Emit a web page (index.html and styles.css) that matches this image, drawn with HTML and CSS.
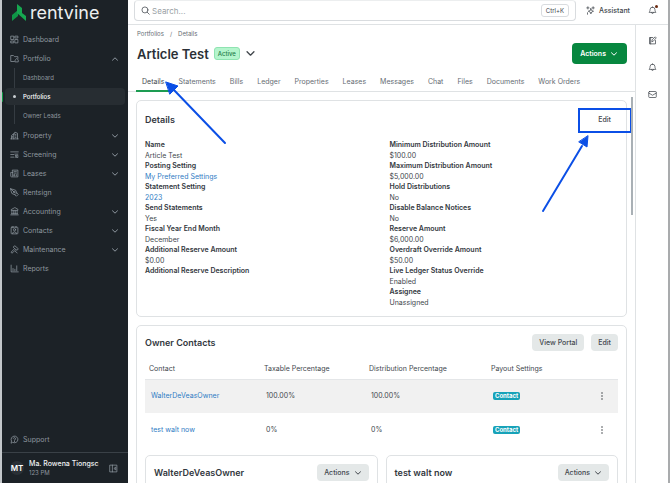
FILE: index.html
```html
<!DOCTYPE html>
<html lang="en">
	<head>
		<meta charset="UTF-8" />
		<meta name="viewport" content="width=device-width, initial-scale=1.0" />
		<title>Article Test - Rentvine</title>
		<link rel="stylesheet" href="styles.css">
	</head>
	<body>
		<svg class="sprite" aria-hidden="true">
			<symbol id="chevron" viewBox="0 0 8 8"><path d="M1.5 2.8 4 5.2 6.5 2.8" /></symbol>
			<symbol id="chevron-up" viewBox="0 0 8 8"><path d="M1.5 5.2 4 2.8 6.5 5.2" /></symbol>
			<symbol id="bell" viewBox="0 0 24 24"><path d="M12 3a6.500 6.500 0 0 0-6.500 6.500c0 4-1.500 5.500-2.500 7.500h18c-1-2-2.500-3.500-2.500-7.500A6.500 6.500 0 0 0 12 3zM9.500 17.500a2.500 2.500 0 0 0 5 0" /></symbol>
		</svg>

		<aside class="sidebar">
			<a href="#" class="logo">
				<svg viewBox="0 0 14 20"><path class="leaf-dark" d="M0 12 6 7v6L0 18z" /><path class="leaf" d="M5 1l5 4v5l4 3v5L5 10z" /></svg>
				<span>rentvine</span>
			</a>

			<nav class="menu">
				<a href="#" class="menu-item"><svg class="icon" viewBox="0 0 24 24"><path d="M3 3h7v9H3zM14 3h7v5h-7zM14 12h7v9h-7zM3 16h7v5H3z" /></svg><span>Dashboard</span></a>
				<button class="menu-item"><svg class="icon" viewBox="0 0 24 24"><path d="M11 20H2V4h7l3 3h9v5M14 16l4-4 4 4v5h-8z" /></svg><span>Portfolio</span><svg class="arrow"><use href="#chevron-up" /></svg></button>
				<div class="submenu">
					<a href="#">Dashboard</a>
					<a href="#" class="current">Portfolios</a>
					<a href="#">Owner Leads</a>
				</div>
				<button class="menu-item"><svg class="icon" viewBox="0 0 24 24"><path d="M2 21h20M4 21V12l6-5v14M10 10l3-7 7 3v15M7 14v3M14 9h2M14 13h2M14 17h2" /></svg><span>Property</span><svg class="arrow"><use href="#chevron" /></svg></button>
				<button class="menu-item"><svg class="icon" viewBox="0 0 24 24"><path d="M2 5h20M2 12h8M2 19h8M13 11h8M14 14l2 2-2 4M18 14h3v6h-3z" /></svg><span>Screening</span><svg class="arrow"><use href="#chevron" /></svg></button>
				<button class="menu-item"><svg class="icon" viewBox="0 0 24 24"><path d="M7 3h14v18H4a2 2 0 0 1-2-2V9h5zM7 9v10M11 7h6M11 11h6M11 15h2v3h-2zM17 15v3" /></svg><span>Leases</span><svg class="arrow"><use href="#chevron" /></svg></button>
				<a href="#" class="menu-item"><svg class="icon" viewBox="0 0 24 24"><path d="M2 2l13 4 3 7-5 5-7-3zM2 2l8 8M18 13l4 4-5 5-4-4" /><circle cx="11" cy="11" r="2" /></svg><span>Rentsign</span></a>
				<button class="menu-item"><svg class="icon" viewBox="0 0 24 24"><path d="M2 21h20M4 18h16M12 2 3 7v2h18V7zM5 10v8M10 10v8M14 10v8M19 10v8" /></svg><span>Accounting</span><svg class="arrow"><use href="#chevron" /></svg></button>
				<button class="menu-item"><svg class="icon" viewBox="0 0 24 24"><rect x="3" y="3" width="18" height="18" rx="2" /><circle cx="12" cy="10" r="3" /><path d="M7 20v-2q5-5 10 0v2M8 1v4M16 1v4" /></svg><span>Contacts</span><svg class="arrow"><use href="#chevron" /></svg></button>
				<button class="menu-item"><svg class="icon" viewBox="0 0 24 24"><path d="M12 10 3 19l2 3 10-9M9 5l4-3 9 8-3 4-4-2-5-5zM14 17l5 4" /></svg><span>Maintenance</span><svg class="arrow"><use href="#chevron" /></svg></button>
				<a href="#" class="menu-item"><svg class="icon" viewBox="0 0 24 24"><path d="M3 3v18h19M8 12v6M13 14v4M18 5v13" /></svg><span>Reports</span></a>
			</nav>

			<a href="#" class="menu-item support"><svg class="icon" viewBox="0 0 24 24"><path d="M3 21l1-5a9 9 0 1 1 4 4zM9 9a3 3 0 1 1 3 4v1M12 17v1" /></svg><span>Support</span></a>

			<div class="user">
				<span class="avatar">MT</span>
				<div class="user-text">
					<div class="user-name">Ma. Rowena Tiongsc</div>
					<div class="user-time">123 PM</div>
				</div>
				<button class="icon-btn" aria-label="Collapse menu"><svg class="icon" viewBox="0 0 24 24"><path d="M3 3h18v18H3zM9 3v18M17 9l-4 3 4 3z" /></svg></button>
			</div>
		</aside>

		<div class="page">
			<header class="topbar">
				<label class="search">
					<svg class="icon" viewBox="0 0 24 24"><circle cx="10.500" cy="10.500" r="8" /><path d="M16.500 16.500 22 22" /></svg>
					<input type="text" placeholder="Search..." aria-label="Search" />
					<kbd>Ctrl+K</kbd>
				</label>
				<button class="assistant"><svg class="icon" viewBox="0 0 24 24"><path d="M13 7l2 5 5 2-5 2-2 5-2-5-5-2 5-2zM5 2v6M2 5h6M19 2v6M16 5h6M4 18v4" /></svg>Assistant</button>
				<button class="icon-btn" aria-label="Notifications"><svg class="icon"><use href="#bell" /></svg><i class="dot"></i></button>
			</header>

			<div class="body">
				<main class="main">
					<div class="head">
						<nav class="crumbs"><a href="#">Portfolios</a><span>/</span><a href="#">Details</a></nav>
						<div class="title-row">
							<h1>Article Test</h1>
							<span class="badge">Active</span>
							<button class="icon-btn" aria-label="Switch portfolio"><svg class="title-arrow"><use href="#chevron" /></svg></button>
							<button class="btn btn-primary">Actions <svg class="arrow"><use href="#chevron" /></svg></button>
						</div>
					</div>

					<nav class="tabs">
						<a href="#" class="active">Details
							<svg class="pointer pointer-tab" viewBox="0 0 62 66"><path class="line" d="M60 63 8 9" /><path class="tip" d="M1 2 13 6 5 14z" /></svg>
						</a>
						<a href="#">Statements</a>
						<a href="#">Bills</a>
						<a href="#">Ledger</a>
						<a href="#">Properties</a>
						<a href="#">Leases</a>
						<a href="#">Messages</a>
						<a href="#">Chat</a>
						<a href="#">Files</a>
						<a href="#">Documents</a>
						<a href="#">Work Orders</a>
					</nav>

					<div class="content">
						<section class="card">
							<div class="card-head card-head-tall">
								<h2>Details</h2>
								<div class="marked">
									<button class="btn btn-plain">Edit</button>
									<span class="marker"></span>
									<svg class="pointer pointer-edit" viewBox="0 0 50 80"><path class="line" d="M3 77 42 12" /><path class="tip" d="M48 2 47 13 39 8z" /></svg>
								</div>
							</div>
							<div class="details">
								<dl>
									<dt>Name</dt>
									<dd>Article Test</dd>
									<dt>Posting Setting</dt>
									<dd><a href="#">My Preferred Settings</a></dd>
									<dt>Statement Setting</dt>
									<dd><a href="#">2023</a></dd>
									<dt>Send Statements</dt>
									<dd>Yes</dd>
									<dt>Fiscal Year End Month</dt>
									<dd>December</dd>
									<dt>Additional Reserve Amount</dt>
									<dd>$0.00</dd>
									<dt>Additional Reserve Description</dt>
									<dd></dd>
								</dl>
								<dl>
									<dt>Minimum Distribution Amount</dt>
									<dd>$100.00</dd>
									<dt>Maximum Distribution Amount</dt>
									<dd>$5,000.00</dd>
									<dt>Hold Distributions</dt>
									<dd>No</dd>
									<dt>Disable Balance Notices</dt>
									<dd>No</dd>
									<dt>Reserve Amount</dt>
									<dd>$6,000.00</dd>
									<dt>Overdraft Override Amount</dt>
									<dd>$50.00</dd>
									<dt>Live Ledger Status Override</dt>
									<dd>Enabled</dd>
									<dt>Assignee</dt>
									<dd>Unassigned</dd>
								</dl>
							</div>
						</section>

						<section class="card">
							<div class="card-head">
								<h2>Owner Contacts</h2>
								<div class="btn-group">
									<button class="btn">View Portal</button>
									<button class="btn">Edit</button>
								</div>
							</div>
							<table>
								<thead>
									<tr>
										<th class="col-contact">Contact</th>
										<th class="col-tax">Taxable Percentage</th>
										<th class="col-dist">Distribution Percentage</th>
										<th>Payout Settings</th>
										<th class="col-more"></th>
									</tr>
								</thead>
								<tbody>
									<tr>
										<td><a href="#">WalterDeVeasOwner</a></td>
										<td>100.00%</td>
										<td>100.00%</td>
										<td><span class="tag">Contact</span></td>
										<td><button class="icon-btn" aria-label="More"><svg class="more" viewBox="0 0 8 8"><circle cx="4" cy="1" r="0.800" /><circle cx="4" cy="4" r="0.800" /><circle cx="4" cy="7" r="0.800" /></svg></button></td>
									</tr>
									<tr>
										<td><a href="#">test walt now</a></td>
										<td>0%</td>
										<td>0%</td>
										<td><span class="tag">Contact</span></td>
										<td><button class="icon-btn" aria-label="More"><svg class="more" viewBox="0 0 8 8"><circle cx="4" cy="1" r="0.800" /><circle cx="4" cy="4" r="0.800" /><circle cx="4" cy="7" r="0.800" /></svg></button></td>
									</tr>
								</tbody>
							</table>
							<div class="owners">
								<div class="card owner">
									<div class="card-head">
										<h2>WalterDeVeasOwner</h2>
										<button class="btn">Actions <svg class="arrow"><use href="#chevron" /></svg></button>
									</div>
								</div>
								<div class="card owner">
									<div class="card-head">
										<h2>test walt now</h2>
										<button class="btn">Actions <svg class="arrow"><use href="#chevron" /></svg></button>
									</div>
								</div>
							</div>
						</section>
					</div>
					<div class="scroll-thumb"></div>
				</main>

				<aside class="rail">
					<button class="icon-btn" aria-label="Notes"><svg class="icon" viewBox="0 0 24 24"><path d="M13 4H4v17h16v-9M7 4v17M20 3l2 2-8 9-4 1 1-4z" /></svg></button>
					<button class="icon-btn" aria-label="Reminders"><svg class="icon"><use href="#bell" /></svg></button>
					<button class="icon-btn" aria-label="Mail"><svg class="icon" viewBox="0 0 24 24"><rect x="2" y="4" width="20" height="16" rx="2" /><path d="M2 8l10 6 10-6" /></svg></button>
				</aside>
			</div>
		</div>
	</body>
</html>
```
FILE: styles.css
```css
* {
	box-sizing: border-box;
}
body {
	margin: 0;
	display: flex;
	height: 100vh;
	overflow: hidden;
	font-family: Inter, "Liberation Sans", sans-serif;
	font-size: 7px;
	line-height: 10px;
	color: #42474d;
	background: #fff;
	border-left: 2px solid #c3c7ca;
	border-right: 2px solid #a9abad;
}
a {
	color: inherit;
	text-decoration: none;
}
button {
	font: inherit;
	color: inherit;
	border: 0;
	padding: 0;
	background: none;
}
svg {
	display: block;
	fill: none;
	stroke: currentColor;
	stroke-linecap: round;
	stroke-linejoin: round;
}
.sprite {
	position: absolute;
	width: 0;
	height: 0;
}
.icon {
	width: 9px;
	height: 9px;
	stroke-width: 2;
	flex: none;
}
.arrow {
	width: 8px;
	height: 8px;
	flex: none;
}
.icon-btn {
	display: flex;
	position: relative;
}

/* sidebar */
.sidebar {
	flex: none;
	width: 126px;
	display: flex;
	flex-direction: column;
	background: #1c2227;
	color: #8e979f;
}
.logo {
	display: flex;
	align-items: center;
	gap: 4px;
	height: 30px;
	padding: 0 0 4px 10px;
	color: #eceff0;
	font-size: 18px;
	line-height: 24px;
}
.logo svg {
	width: 14px;
	height: 20px;
	stroke: none;
}
.leaf {
	fill: #16a750;
}
.leaf-dark {
	fill: #0f9446;
}
.menu {
	flex: 1;
}
.menu-item {
	display: flex;
	align-items: center;
	gap: 4px;
	width: 100%;
	height: 19px;
	padding: 0 9px 0 8px;
	text-align: left;
}
.menu-item span {
	flex: 1;
}
.submenu {
	position: relative;
	padding-bottom: 1px;
	font-size: 6px;
}
.submenu::before {
	content: "";
	position: absolute;
	left: 12px;
	top: 0;
	bottom: 2px;
	border-left: 1px solid #353c42;
}
.submenu a {
	display: flex;
	align-items: center;
	height: 19px;
	margin: 0 3px;
	padding-left: 18px;
}
.submenu .current {
	position: relative;
	height: 17px;
	margin-top: 1px;
	margin-bottom: 1px;
	border-radius: 4px;
	background: #272d32;
	color: #fff;
	font-weight: 500;
}
.current::before {
	content: "";
	position: absolute;
	left: 8px;
	width: 3px;
	height: 3px;
	border-radius: 50%;
	background: #c9ced2;
}
.current::after {
	content: "";
	position: absolute;
	left: -4px;
	width: 2px;
	height: 10px;
	border-radius: 1px;
	background: #0c9c45;
}
.support {
	margin-bottom: 3px;
}
.user {
	display: flex;
	align-items: center;
	gap: 5px;
	height: 31px;
	padding: 0 10px 0 8px;
	border-top: 1px solid #3a4147;
}
.avatar {
	width: 14px;
	height: 14px;
	border-radius: 50%;
	background: #2a3036;
	color: #fff;
	font-size: 8px;
	font-weight: 600;
	line-height: 14px;
	text-align: center;
}
.user-text {
	flex: 1;
	min-width: 0;
	white-space: nowrap;
	overflow: hidden;
}
.user-name {
	color: #f1f3f4;
	font-weight: 500;
	line-height: 9px;
}
.user-time {
	font-size: 6px;
	line-height: 9px;
}

/* top bar */
.page {
	flex: 1;
	min-width: 0;
	display: flex;
	flex-direction: column;
}
.topbar {
	flex: none;
	display: flex;
	align-items: center;
	height: 25px;
	padding: 0 11px 3px 6px;
	border-bottom: 1px solid #dfe2e4;
}
.search {
	flex: 1;
	display: flex;
	align-items: center;
	gap: 2px;
	height: 21px;
	padding: 0 6px;
	border: 1px solid #d9dcdf;
	border-top-color: #eceeef;
	border-radius: 4px;
}
.search input {
	flex: 1;
	min-width: 0;
	padding: 0;
	border: 0;
	outline: 0;
	font: inherit;
	font-size: 8px;
	background: none;
}
.search input::placeholder {
	color: #9a9fa5;
}
kbd {
	padding: 0 4px;
	border: 1px solid #d9dcdf;
	border-radius: 3px;
	font: inherit;
	font-size: 6px;
	line-height: 11px;
}
.assistant {
	display: flex;
	align-items: center;
	gap: 4px;
	margin: 0 18px 0 10px;
	font-weight: 500;
}
.dot {
	position: absolute;
	top: -1px;
	right: -1px;
	width: 3px;
	height: 3px;
	border-radius: 50%;
	background: #6b2a10;
}
.body {
	flex: 1;
	min-height: 0;
	display: flex;
}
.rail {
	flex: none;
	width: 33px;
	display: flex;
	flex-direction: column;
	align-items: center;
	gap: 18px;
	padding-top: 11px;
	border-left: 1px solid #dfe2e4;
}

/* page head */
.main {
	flex: 1;
	min-width: 0;
	position: relative;
	display: flex;
	flex-direction: column;
}
.head {
	padding: 4px 8px 0 9px;
}
.crumbs {
	display: flex;
	gap: 6px;
	font-size: 6px;
	color: #666d74;
}
.title-row {
	display: flex;
	align-items: center;
	gap: 5px;
	height: 29px;
}
h1 {
	margin: 0;
	font-size: 13px;
	line-height: 20px;
	font-weight: 600;
	color: #2b3036;
}
.badge {
	padding: 0 3px;
	border: 1px solid #8fe3b1;
	border-radius: 3px;
	background: #b4f5cd;
	color: #1f7c48;
	font-size: 6px;
	line-height: 11px;
	font-weight: 500;
}
.title-arrow {
	width: 11px;
	height: 11px;
}
.btn {
	display: flex;
	align-items: center;
	gap: 4px;
	height: 17px;
	padding: 0 7px;
	border-radius: 4px;
	background: #e4e8e8;
	font-weight: 500;
}
.btn-primary {
	height: 21px;
	margin-left: auto;
	padding: 0 9px 0 8px;
	background: #07873f;
	color: #fff;
	font-weight: 600;
}
.btn-plain {
	background: none;
}
.tabs {
	display: flex;
	gap: 2px;
	padding: 0 8px;
	border-bottom: 1px solid #dfe2e4;
	color: #666d74;
}
.tabs a {
	position: relative;
	padding: 9px 6px 4px;
	white-space: nowrap;
}
.tabs .active {
	padding-bottom: 3px;
	color: #42474d;
	border-bottom: 2px solid #1d9c52;
	margin-bottom: -1px;
}

/* cards */
.content {
	flex: 1;
	min-height: 0;
	display: flex;
	flex-direction: column;
	gap: 8px;
	padding: 8px 8px 0;
	overflow: hidden;
}
.card {
	flex: none;
	padding: 8px;
	border: 1px solid #dfe2e4;
	border-radius: 5px;
}
.card-head {
	display: flex;
	align-items: center;
	justify-content: space-between;
	height: 17px;
}
.card-head-tall {
	height: 22px;
}
h2 {
	margin: 0;
	font-size: 9px;
	line-height: 12px;
	font-weight: 600;
	color: #33383e;
}
.btn-group {
	display: flex;
	gap: 7px;
}
.details {
	display: grid;
	grid-template-columns: 1fr 1fr;
	gap: 16px;
	padding-top: 9px;
}
dl {
	margin: 0;
}
dt {
	font-weight: 600;
	line-height: 10px;
	color: #33383e;
}
dd {
	margin: 0;
	min-height: 11px;
	line-height: 11px;
}
dd a,
td a {
	color: #2f7cc4;
}
table {
	width: 100%;
	border-collapse: collapse;
	table-layout: fixed;
}
th {
	height: 28px;
	padding: 8px 4px 0;
	text-align: left;
	font-weight: 400;
	border-bottom: 1px solid #e4e6e8;
}
td {
	height: 34px;
	padding: 0 6px;
}
tbody tr:nth-child(odd) {
	background: #f1f1f1;
}
.col-contact {
	width: 115px;
}
.col-tax {
	width: 105px;
}
.col-dist {
	width: 122px;
}
.col-more {
	width: 26px;
}
.tag {
	display: inline-block;
	padding: 0 2px;
	border-radius: 2px;
	background: #17a2b8;
	color: #fff;
	font-size: 6px;
	line-height: 8px;
	font-weight: 700;
}
.more {
	width: 8px;
	height: 8px;
	fill: currentColor;
	stroke: none;
}
.owners {
	display: grid;
	grid-template-columns: 1fr 1fr;
	gap: 8px;
	padding-top: 8px;
}
.owner {
	height: 60px;
}
.scroll-thumb {
	position: absolute;
	top: 72px;
	right: 2px;
	width: 2px;
	height: 118px;
	background: #a9b0b5;
}

/* callouts */
.marked {
	position: relative;
}
.marker {
	position: absolute;
	inset: -4px -14px -4px -13px;
	border: 2px solid #0b4fe6;
}
.pointer {
	position: absolute;
	z-index: 2;
}
.pointer .line {
	stroke: #0b4fe6;
	stroke-width: 2;
}
.pointer .tip {
	fill: #0b4fe6;
	stroke: #0b4fe6;
}
.pointer-tab {
	width: 62px;
	height: 66px;
	left: 29px;
	top: 12px;
}
.pointer-edit {
	width: 50px;
	height: 80px;
	right: 28px;
	top: 22px;
}
```
